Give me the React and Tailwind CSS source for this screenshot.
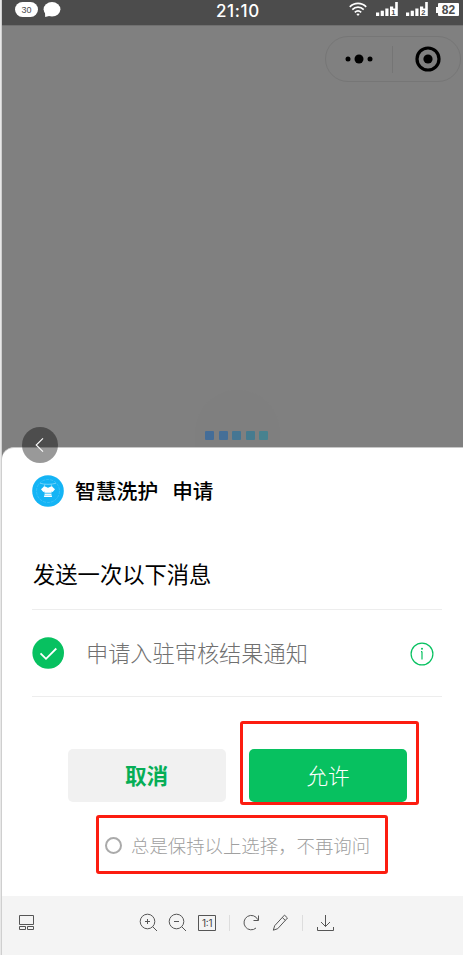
const SignalIcon = ({ sim }) => (
  <svg className="w-[23px] h-[15px]" viewBox="0 0 23 15" fill="#fff">
    <rect x="0" y="10.5" width="3.2" height="3.5" />
    <rect x="4.7" y="8.7" width="3.2" height="5.3" />
    <rect x="9.3" y="6.5" width="3.2" height="7.5" />
    <path d="M14 4.5h3.2v2h2V0h2.6v14H14z" />
    <text x="15.2" y="13" fontSize="7.5" fontWeight="700" fill="#4c4c4c" fontFamily="Liberation Sans, sans-serif">{sim}</text>
  </svg>
)

const StatusBar = () => (
  <div className="relative h-[26px] shrink-0 bg-[#4c4c4c] border-b border-[#707070] text-white">
    <div className="flex items-start pl-[13px] pt-[2px]">
      <div className="w-[23px] h-[15px] rounded-full bg-white text-[#4c4c4c] text-[9px] leading-[16px] text-center font-['Liberation_Sans',sans-serif]">30</div>
      <svg className="ml-[5px] w-[18px] h-[15px]" viewBox="0 0 18 15" fill="#fff">
        <ellipse cx="9" cy="7.3" rx="8.4" ry="7.2" />
        <path d="M2 9.5L2.2 15l6-1.5z" />
      </svg>
    </div>
    <span className="absolute left-[214px] top-px text-[17px] leading-[21px] font-medium tracking-[0.6px]">21:10</span>
    <div className="absolute left-[347px] top-[2px] flex items-start">
      <svg className="w-[18px] h-[15px]" viewBox="0 0 18 15" fill="none" stroke="#fff" strokeWidth="1.7">
        <path d="M.8 4.8c4.7-4.7 11.7-4.7 16.4 0M3.3 7.6c3.3-3.2 8.1-3.2 11.4 0M5.8 10.3c1.9-1.8 4.5-1.8 6.4 0" />
        <path d="M9 14l-1.7-2c1-.8 2.4-.8 3.4 0z" fill="#fff" stroke="none" />
      </svg>
      <div className="ml-[9px]"><SignalIcon sim="1" /></div>
      <div className="ml-[7px]"><SignalIcon sim="2" /></div>
      <div className="ml-[7px] mt-[5px] w-[2px] h-[6px] bg-white" />
      <div className="mt-[1px] w-[21px] h-[13px] rounded-[1px] bg-white text-[#4c4c4c] text-[12px] leading-[14px] font-bold text-center font-['Liberation_Sans',sans-serif]">82</div>
    </div>
  </div>
)

const Capsule = () => (
  <div className="ml-[323px] mt-[10px] w-[136px] h-[46px] rounded-full border border-[#767676] flex items-center">
    <svg className="ml-[19px] w-[28px] h-[10px]" viewBox="0 0 28 10">
      <circle cx="3" cy="5" r="2.5" />
      <circle cx="14" cy="5" r="4.5" />
      <circle cx="25" cy="5" r="2.5" />
    </svg>
    <div className="ml-[19px] w-px h-[27px] bg-[#757575]" />
    <svg className="ml-[22px] w-[26px] h-[26px]" viewBox="0 0 26 26">
      <circle cx="13" cy="13" r="11" fill="none" stroke="#000" strokeWidth="3.2" />
      <circle cx="13" cy="13" r="4.6" />
    </svg>
  </div>
)

const Backdrop = () => (
  <div className="relative h-[421px] shrink-0 bg-[#808080] flow-root">
    <Capsule />
    <div className="absolute left-[193px] top-[364px] w-[85px] h-[57px] rounded-t-full bg-[#7f7f7f]" />
    <div className="absolute left-[203px] top-[405px] flex gap-[4.5px]">
      <div className="w-[9px] h-[9px] rounded-[1px] bg-[#446d98]" />
      <div className="w-[9px] h-[9px] rounded-[1px] bg-[#456f98]" />
      <div className="w-[9px] h-[9px] rounded-[1px] bg-[#457693]" />
      <div className="w-[9px] h-[9px] rounded-[1px] bg-[#467b8f]" />
      <div className="w-[9px] h-[9px] rounded-[1px] bg-[#47828f]" />
    </div>
  </div>
)

const AppLogo = () => (
  <svg className="w-[32px] h-[32px]" viewBox="0 0 32 32">
    <circle cx="16" cy="16" r="15.8" fill="#14b4f5" />
    <circle cx="16" cy="16" r="11.5" fill="none" stroke="#5bcbf8" strokeWidth=".5" strokeDasharray="3 1" />
    <path d="M8 8.2c4 1.5 12 1.5 16 0M13 9.3l-1.2 3M19 9.3l1.2 3" fill="none" stroke="#c9eefd" strokeWidth=".5" />
    <path d="M12.3 11.3l2 .8c1 .8 2.4.8 3.4 0l2-.8 3.3 3-2.3 2.8-1.2-.7v2.1h-7v-2.1l-1.2.7L9 14.3z" fill="#fff" />
    <path d="M12.7 19h6.6l.8 3h-8.2z" fill="#fff" />
    <path d="M12.5 18h7M12.3 20.3h7.4" fill="none" stroke="#14b4f5" strokeWidth=".5" />
  </svg>
)

const Sheet = () => (
  <div className="relative h-[449px] shrink-0 bg-[#808080]">
    <div className="h-full rounded-tl-[12px] bg-white border-t border-[#c8c8c8] pl-[30px] pr-[21px] flex flex-col">
      <div className="mt-[27px] h-[32px] flex items-center text-black">
        <AppLogo />
        <span className="relative top-px ml-[11px] text-[20.8px] font-medium whitespace-nowrap">智慧洗护</span>
        <span className="relative top-px ml-[14px] text-[20.6px] font-medium whitespace-nowrap">申请</span>
      </div>
      <div className="mt-[51px] h-[34px] pl-px text-[22.3px] leading-[34px] text-black whitespace-nowrap">发送一次以下消息</div>
      <div className="mt-[17px] h-[88px] border-y border-[#ededed] flex items-center">
        <svg className="w-[32px] h-[32px]" viewBox="0 0 32 32">
          <circle cx="16.2" cy="16" r="15.8" fill="#07c160" />
          <path d="M8.5 16.3l5.5 5.5L24.3 11.5" fill="none" stroke="#fff" strokeWidth="1.8" />
        </svg>
        <span className="ml-[22px] mt-[2px] text-[22.2px] text-[#707070] font-light whitespace-nowrap">申请入驻审核结果通知</span>
        <svg className="ml-auto mr-[8.5px] mt-px w-[24px] h-[24px]" viewBox="0 0 24 24" fill="none" stroke="#07c160" strokeWidth="1.2">
          <circle cx="12" cy="12" r="10.9" />
          <path d="M12 9.5v8M11 9.6h1" />
          <circle cx="12" cy="6.8" r="1" fill="#07c160" stroke="none" />
        </svg>
      </div>
      <div className="mt-[52px] pl-[36px] flex gap-[23px]">
        <button className="w-[158px] h-[53px] rounded-[5px] bg-[#f1f1f1] text-[#06ae56] text-[21.6px] font-bold pt-[2px] pr-px">取消</button>
        <div className="relative">
          <button className="w-[158px] h-[53px] rounded-[5px] bg-[#07c160] text-white text-[21.6px] font-light pt-[2px]">允许</button>
          <div className="absolute left-[-9px] top-[-28px] w-[179px] h-[84px] border-[3px] border-[#fc1d10] rounded-[3px]" />
        </div>
      </div>
      <div className="mt-[13px] ml-[64px] w-[292px] h-[59px] border-[3px] border-[#fc1d10] rounded-[3px] flex items-center pl-[6px]">
        <div className="w-[17px] h-[17px] shrink-0 rounded-full border-2 border-[#aaa] mt-[2px]" />
        <span className="ml-[9px] mt-[4px] text-[18.4px] text-[#a0a0a0] font-light whitespace-nowrap">总是保持以上选择，不再询问</span>
      </div>
    </div>
    {/* back button straddles the sheet edge */}
    <div className="absolute left-[20px] top-[-20px] w-[36px] h-[36px] rounded-full bg-black/40 flex items-center justify-center">
      <svg className="w-[10px] h-[16px]" viewBox="0 0 10 16" fill="none" stroke="#fff" strokeWidth="1.1">
        <path d="M8 1.3L1.2 8 8 14.7" />
      </svg>
    </div>
  </div>
)

const Toolbar = () => (
  <div className="h-[59px] shrink-0 bg-[#f4f4f4]">
    <svg className="block w-[461px] h-[59px]" viewBox="2 896 461 59" fill="none" stroke="#555" strokeWidth="1">
      <path d="M19.5 915.5h14v9h-14zM19.5 926.5h6v3h-6zM27.5 926.5h6v3h-6z" />
      <circle cx="147.5" cy="921.5" r="7.3" />
      <path d="M152.7 926.7l4.3 4.3M145 921.5h5M147.5 919v5" />
      <circle cx="176.5" cy="921.5" r="7.3" />
      <path d="M181.7 926.7l4.3 4.3M174 921.5h5" />
      <path d="M198.5 915.5h17v15h-17z" />
      <text x="202" y="926.5" fontSize="10" fill="#444" stroke="none" fontFamily="Inter, sans-serif" textLength="10.5">1:1</text>
      <path d="M229.5 915v16M302.5 915v16" stroke="#ddd" />
      <path d="M257.8 919.7A7.2 7.2 0 1 0 256 928M258.5 915.5v5h-5" />
      <path d="M273.3 930.2l1.4-4.5 9.8-10.6 3 2.9-9.8 10.7zM282.3 917.5l3 2.9" />
      <path d="M325.5 915v11.5M321 922l4.5 4.5 4.5-4.5M317.5 927v3.5h16v-3.5" />
    </svg>
  </div>
)

export default function App() {
  return (
    <div className="w-[463px] h-[955px] overflow-hidden flex bg-white font-[Inter,'Noto_Sans_CJK_SC',sans-serif]">
      <div className="w-[2px] shrink-0 bg-[#e8e8e8] border-r border-[#cfcfcf]" />
      <div className="w-[461px] flex flex-col">
        <StatusBar />
        <Backdrop />
        <Sheet />
        <Toolbar />
      </div>
    </div>
  )
}
